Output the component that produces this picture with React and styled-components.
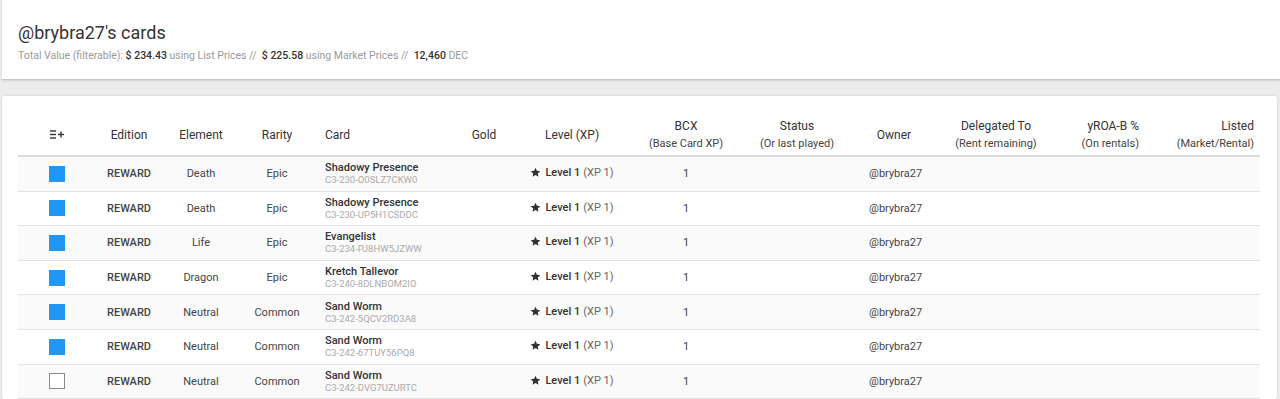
import React from 'react'
import styled, { createGlobalStyle } from 'styled-components'

const GlobalStyle = createGlobalStyle`
  body {
    margin: 0;
    background: #ececec;
    font-family: Roboto, "Liberation Sans", Arial, sans-serif;
    color: #333;
  }
`

const cards = [
  { name: 'Shadowy Presence', id: 'C3-230-O0SLZ7CKW0', element: 'Death', rarity: 'Epic', checked: true },
  { name: 'Shadowy Presence', id: 'C3-230-UP5H1CSDDC', element: 'Death', rarity: 'Epic', checked: true },
  { name: 'Evangelist', id: 'C3-234-PJ8HW5JZWW', element: 'Life', rarity: 'Epic', checked: true },
  { name: 'Kretch Tallevor', id: 'C3-240-8DLNBOM2IO', element: 'Dragon', rarity: 'Epic', checked: true },
  { name: 'Sand Worm', id: 'C3-242-5QCV2RD3A8', element: 'Neutral', rarity: 'Common', checked: true },
  { name: 'Sand Worm', id: 'C3-242-67TUY56PQ8', element: 'Neutral', rarity: 'Common', checked: true },
  { name: 'Sand Worm', id: 'C3-242-DVG7UZURTC', element: 'Neutral', rarity: 'Common', checked: false },
]

const columns = [
  { w: 77, align: 'center' },
  { w: 68, align: 'center', title: 'Edition' },
  { w: 76, align: 'center', title: 'Element' },
  { w: 76, align: 'center', title: 'Rarity' },
  { w: 125, align: 'left', title: 'Card', pad: '0 0 0 10px' },
  { w: 88, align: 'center', title: 'Gold' },
  { w: 88, align: 'center', title: 'Level (XP)' },
  { w: 140, align: 'center', title: 'BCX', sub: '(Base Card XP)' },
  { w: 82, align: 'center', title: 'Status', sub: '(Or last played)' },
  { w: 112, align: 'center', title: 'Owner' },
  { w: 92, align: 'center', title: 'Delegated To', sub: '(Rent remaining)' },
  { w: 107, align: 'right', title: 'yROA-B %', sub: '(On rentals)', pad: '0 10px 0 0' },
  { w: 111, align: 'right', title: 'Listed', sub: '(Market/Rental)', pad: '0 6px 0 0' },
]

const ColumnsIcon = () => (
  <svg width="14" height="9" viewBox="0 0 14 9">
    <g stroke="#333" strokeWidth="1.4">
      <line x1="0" y1="1" x2="6" y2="1" />
      <line x1="0" y1="4.5" x2="6" y2="4.5" />
      <line x1="0" y1="8" x2="6" y2="8" />
      <line x1="8" y1="4.5" x2="14" y2="4.5" />
      <line x1="11" y1="1.5" x2="11" y2="7.5" />
    </g>
  </svg>
)

const StarIcon = () => (
  <svg width="11" height="11" viewBox="0 0 24 24">
    <polygon
      fill="#333"
      points="12,1.5 15.1,8.3 22.5,9.1 17,14.1 18.5,21.4 12,17.7 5.5,21.4 7,14.1 1.5,9.1 8.9,8.3"
    />
  </svg>
)

export default function App() {
  return (
    <Page>
      <GlobalStyle />
      <HeaderCard>
        <Title>@brybra27's cards</Title>
        <Summary>
          Total Value (filterable): <Strong>$ 234.43</Strong> using List Prices //&nbsp;{' '}
          <Strong>$ 225.58</Strong> using Market Prices //&nbsp;{' '}
          <Strong>12,460</Strong> DEC
        </Summary>
      </HeaderCard>

      <TableCard>
        <Table>
          <colgroup>
            {columns.map((c, i) => (
              <col key={i} style={{ width: c.w }} />
            ))}
          </colgroup>
          <thead>
            <tr>
              {columns.map((c, i) => (
                <Th key={i} $align={c.align} $pad={c.pad}>
                  {i === 0 ? <ColumnsIcon /> : c.title}
                  {c.sub && <SubHead>{c.sub}</SubHead>}
                </Th>
              ))}
            </tr>
          </thead>
          <tbody>
            {cards.map((card, i) => (
              <Row key={i} $striped={i % 2 === 0}>
                <Td $align="center">
                  <Check $checked={card.checked} />
                </Td>
                <Td $align="center" $bold>REWARD</Td>
                <Td $align="center">{card.element}</Td>
                <Td $align="center">{card.rarity}</Td>
                <Td $align="left" $pad="0 0 0 10px">
                  <CardName>{card.name}</CardName>
                  <CardId>{card.id}</CardId>
                </Td>
                <Td />
                <Td $align="center">
                  <Level>
                    <StarIcon />
                    <b>Level 1</b> <span>(XP 1)</span>
                  </Level>
                </Td>
                <Td $align="center">1</Td>
                <Td />
                <Td $align="left" $pad="0 0 0 31px">@brybra27</Td>
                <Td />
                <Td />
                <Td />
              </Row>
            ))}
          </tbody>
        </Table>
      </TableCard>
    </Page>
  )
}

const Page = styled.div`
  padding-left: 2px;
  height: 399px;
  overflow: hidden;
`

const HeaderCard = styled.section`
  background: #fff;
  height: 80px;
  box-sizing: border-box;
  padding: 22px 16px 0;
  border-bottom: 1px solid #c8c8c8;
  box-shadow: 0 1px 2px rgba(0, 0, 0, 0.12);
`

const Title = styled.h1`
  margin: 0;
  font-size: 18px;
  font-weight: 400;
  line-height: 22px;
  color: #333;
`

const Summary = styled.p`
  margin: 4px 0 0;
  font-size: 10.5px;
  line-height: 16px;
  color: #9a9a9a;
`

const Strong = styled.span`
  color: #333;
  font-weight: 500;
`

const TableCard = styled.section`
  margin: 16px 3px 0 0;
  background: #fff;
  padding: 19px 17px 0 16px;
  box-shadow: 0 0 2px rgba(0, 0, 0, 0.18);
  border-radius: 2px;
`

const Table = styled.table`
  width: 1242px;
  table-layout: fixed;
  border-collapse: collapse;
`

const Th = styled.th`
  height: 40px;
  padding: ${p => p.$pad || '0'};
  text-align: ${p => p.$align};
  vertical-align: middle;
  font-size: 12px;
  font-weight: 400;
  color: #333;
  line-height: 17px;
  border-bottom: 2px solid #dcdcdc;
  white-space: nowrap;
`

const SubHead = styled.div`
  font-size: 11px;
  line-height: 18px;
  color: #444;
`

const Row = styled.tr`
  background: ${p => (p.$striped ? '#fafafa' : '#fff')};
  border-bottom: 1px solid #e2e2e2;
`

const Td = styled.td`
  height: 33.6px;
  padding: ${p => p.$pad || '0'};
  text-align: ${p => p.$align || 'center'};
  vertical-align: middle;
  font-size: 11px;
  color: #444;
  font-weight: ${p => (p.$bold ? 500 : 400)};
  white-space: nowrap;
`

const Check = styled.span`
  display: inline-block;
  width: 16px;
  height: 16px;
  box-sizing: border-box;
  background: ${p => (p.$checked ? '#2196f3' : '#fff')};
  border: 1px solid ${p => (p.$checked ? '#2196f3' : '#8a8a8a')};
  vertical-align: middle;
`

const CardName = styled.div`
  font-size: 11px;
  font-weight: 500;
  color: #333;
  line-height: 13px;
`

const CardId = styled.div`
  font-size: 9.5px;
  color: #aaa;
  line-height: 12px;
`

const Level = styled.span`
  display: inline-flex;
  align-items: center;
  gap: 3px;
  font-size: 11px;
  color: #666;

  & > b {
    font-weight: 500;
    color: #333;
  }

  & > svg {
    margin-right: 1px;
  }
`
